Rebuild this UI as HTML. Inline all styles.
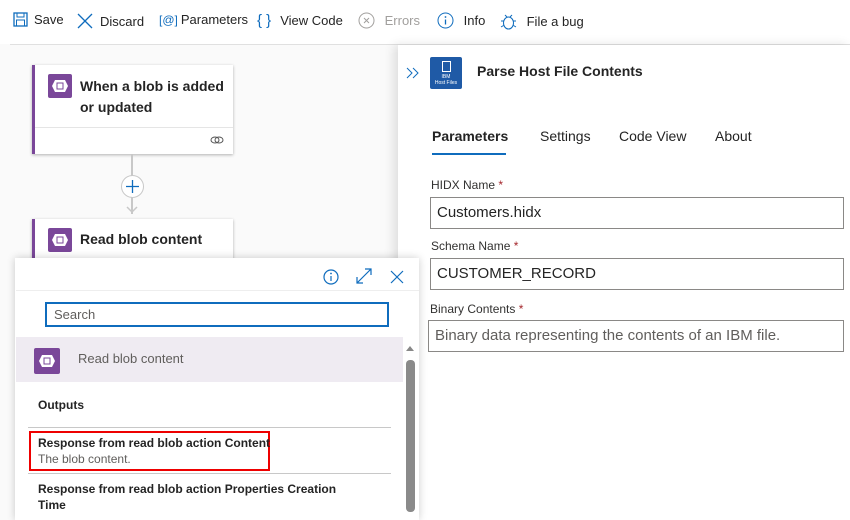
<!DOCTYPE html>
<html><head><style>
*{margin:0;padding:0;box-sizing:border-box}
body{width:850px;height:520px;overflow:hidden;background:#fafafa;font-family:"Segoe UI","Liberation Sans",sans-serif;color:#242424;position:relative}
.a{position:absolute}
.tb{top:0;left:0;width:850px;height:44px;background:#fff}
.tbi{top:12px;font-size:13px;display:flex;align-items:center;gap:6px;color:#242424}
.card{background:#fff;border-left:3px solid #7a4799;box-shadow:0 1px 3px rgba(0,0,0,.3)}
.ic{background:#7a4799;border-radius:2px}
.lbl{font-size:12px;color:#323130}
.lbl b{color:#a4262c;font-weight:normal}
.inp{border:1px solid #8a8886;background:#fff;font-size:15px;padding-left:6px;line-height:30px;color:#242424;left:430px;width:414px;height:32px}
</style></head><body>
<div class="a tb"></div>
<div class="a" style="top:44px;left:10px;width:840px;height:1px;background:#e0e0e0"></div>
<div class="a tbi" style="left:13px"><svg width="15" height="15"><rect x="1" y="1" width="13" height="13" fill="none" stroke="#0f6cbd" stroke-width="1.3"/><rect x="4" y="1" width="7" height="4" fill="none" stroke="#0f6cbd"/><rect x="3.5" y="8" width="8" height="6" fill="none" stroke="#0f6cbd"/></svg>Save</div>
<div class="a tbi" style="left:76px"><svg width="18" height="18"><path d="M2 2L16 16M16 2L2 16" stroke="#0f6cbd" stroke-width="1.3"/></svg>Discard</div>
<div class="a tbi" style="left:159px;gap:3px"><span style="color:#0f6cbd;font-size:12px">[@]</span>Parameters</div>
<div class="a tbi" style="left:257px;gap:9px"><span style="color:#0f6cbd;font-size:15px">{ }</span>View Code</div>
<div class="a tbi" style="left:358px;color:#a19f9d"><svg width="17" height="17"><circle cx="8.5" cy="8.5" r="7.5" fill="none" stroke="#a19f9d"/><path d="M6 6L11 11M11 6L6 11" stroke="#a19f9d"/></svg>&nbsp;Errors</div>
<div class="a tbi" style="left:437px"><svg width="17" height="17"><circle cx="8.5" cy="8.5" r="7.5" fill="none" stroke="#0f6cbd"/><path d="M8.5 7.5V12.5" stroke="#0f6cbd" stroke-width="1.3"/><circle cx="8.5" cy="5" r=".9" fill="#0f6cbd"/></svg>&nbsp;Info</div>
<div class="a tbi" style="left:500px"><svg width="17" height="18"><ellipse cx="8.5" cy="11" rx="5" ry="6" fill="none" stroke="#0f6cbd"/><path d="M5 3L7 5M12 3L10 5M1 9H3.5M13.5 9H16M1 15L3.5 13.5M16 15L13.5 13.5" stroke="#0f6cbd"/></svg>&nbsp;File a bug</div>

<div class="a card" style="left:32px;top:65px;width:201px;height:89px"></div>
<div class="a ic" style="left:48px;top:74px;width:24px;height:24px"><svg width="24" height="24"><polygon points="7,6 17,6 20,12 17,18 7,18 4,12" fill="#fff"/><rect x="9" y="9" width="6" height="6" fill="none" stroke="#7a4799"/></svg></div>
<div class="a" style="left:80px;top:76px;font-size:14px;font-weight:bold;line-height:21px;width:150px">When a blob is added or updated</div>
<div class="a" style="left:35px;top:127px;width:198px;height:1px;background:#e5e5e5"></div>
<svg class="a" style="left:210px;top:134px" width="14" height="12"><ellipse cx="5" cy="6" rx="4" ry="3" fill="none" stroke="#555"/><ellipse cx="9" cy="6" rx="4" ry="3" fill="none" stroke="#555"/></svg>
<div class="a" style="left:131px;top:154px;width:2px;height:60px;background:#c8c8c8"></div>
<div class="a" style="left:121px;top:175px;width:23px;height:23px;border-radius:50%;background:#fff;border:1px solid #c8c8c8"></div>
<svg class="a" style="left:121px;top:175px" width="23" height="23"><path d="M11.5 5V18M5 11.5H18" stroke="#0f6cbd" stroke-width="1.3"/></svg>
<svg class="a" style="left:126px;top:205px" width="12" height="9"><path d="M1 2L6 7L11 2" stroke="#c8c8c8" fill="none" stroke-width="1.5"/></svg>
<div class="a card" style="left:32px;top:219px;width:201px;height:60px"></div>
<div class="a ic" style="left:48px;top:228px;width:24px;height:24px"><svg width="24" height="24"><polygon points="7,6 17,6 20,12 17,18 7,18 4,12" fill="#fff"/><rect x="9" y="9" width="6" height="6" fill="none" stroke="#7a4799"/></svg></div>
<div class="a" style="left:80px;top:231px;font-size:14px;font-weight:bold">Read blob content</div>

<div class="a" style="left:398px;top:45px;width:452px;height:475px;background:#fff;box-shadow:-4px 0 10px rgba(0,0,0,.12)"></div>
<svg class="a" style="left:405px;top:66px" width="16" height="14"><path d="M2 2L7 7L2 12M8 2L13 7L8 12" stroke="#0f6cbd" fill="none"/></svg>
<div class="a" style="left:430px;top:57px;width:32px;height:32px;background:#1f5aa6;border-radius:2px;color:#fff;font-size:5px;text-align:center;line-height:6px;padding-top:4px"><div style="width:9px;height:11px;border:1px solid #fff;margin:0 auto 2px"></div>IBM<br>Host Files</div>
<div class="a" style="left:477px;top:63px;font-size:14px;font-weight:bold">Parse Host File Contents</div>
<div class="a" style="left:432px;top:128px;font-size:14px;font-weight:bold">Parameters</div>
<div class="a" style="left:432px;top:153px;width:74px;height:2px;background:#0f6cbd"></div>
<div class="a" style="left:540px;top:128px;font-size:14px">Settings</div>
<div class="a" style="left:619px;top:128px;font-size:14px">Code View</div>
<div class="a" style="left:715px;top:128px;font-size:14px">About</div>
<div class="a lbl" style="left:431px;top:178px">HIDX Name <b>*</b></div>
<div class="a inp" style="top:197px">Customers.hidx</div>
<div class="a lbl" style="left:431px;top:239px">Schema Name <b>*</b></div>
<div class="a inp" style="top:258px">CUSTOMER_RECORD</div>
<div class="a lbl" style="left:430px;top:302px">Binary Contents <b>*</b></div>
<div class="a inp" style="top:320px;left:428px;width:416px;color:#605e5c">Binary data representing the contents of an IBM file.</div>

<div class="a" style="left:15px;top:258px;width:404px;height:262px;background:#fff;box-shadow:0 0 8px rgba(0,0,0,.2)"></div>
<svg class="a" style="left:322px;top:268px" width="85" height="18"><circle cx="9" cy="9" r="7" fill="none" stroke="#0f6cbd" stroke-width="1.2"/><path d="M9 8V13" stroke="#0f6cbd" stroke-width="1.2"/><circle cx="9" cy="5.5" r=".9" fill="#0f6cbd"/><path d="M35 15L49 1M43 1H49V7M35 9V15H41" stroke="#0f6cbd" fill="none" stroke-width="1.2"/><path d="M69 3L81 15M81 3L69 15" stroke="#0f6cbd" stroke-width="1.2"/></svg>
<div class="a" style="left:16px;top:290px;width:403px;height:1px;background:#eee"></div>
<div class="a" style="left:45px;top:302px;width:344px;height:25px;border:2px solid #0f6cbd;font-size:13px;color:#605e5c;padding-left:7px;line-height:21px">Search</div>
<div class="a" style="left:16px;top:337px;width:387px;height:45px;background:#efebf2"></div>
<div class="a ic" style="left:34px;top:348px;width:26px;height:26px"><svg width="26" height="26"><polygon points="8,7 18,7 21,13 18,19 8,19 5,13" fill="#fff"/><rect x="10" y="10" width="6" height="6" fill="none" stroke="#7a4799"/></svg></div>
<div class="a" style="left:78px;top:351px;font-size:13px;color:#605e5c">Read blob content</div>
<div class="a" style="left:38px;top:398px;font-size:12px;font-weight:bold">Outputs</div>
<div class="a" style="left:28px;top:427px;width:363px;height:1px;background:#c8c8c8"></div>
<div class="a" style="left:29px;top:431px;width:241px;height:40px;border:2px solid #e00"></div>
<div class="a" style="left:38px;top:436px;font-size:12px;font-weight:bold">Response from read blob action Content</div>
<div class="a" style="left:38px;top:452px;font-size:12px;color:#605e5c">The blob content.</div>
<div class="a" style="left:28px;top:473px;width:363px;height:1px;background:#c8c8c8"></div>
<div class="a" style="left:38px;top:481px;font-size:12px;font-weight:bold;line-height:16px;width:300px">Response from read blob action Properties Creation Time</div>
<svg class="a" style="left:405px;top:344px" width="10" height="8"><path d="M1 7L5 2L9 7Z" fill="#888"/></svg>
<div class="a" style="left:406px;top:360px;width:9px;height:152px;background:#8a8a8a;border-radius:4px"></div>
</body></html>
